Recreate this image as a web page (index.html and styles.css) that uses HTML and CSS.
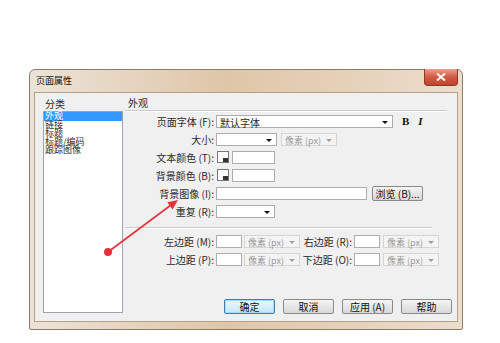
FILE: index.html
```html
<!DOCTYPE html>
<html>
<head>
	<title>页面属性</title>
	<meta charset="utf-8">
	<link rel="stylesheet" href="styles.css">
</head>
<body>
<div class="dlg">
	<!-- 标题栏 -->
	<div class="titlebar">
		<span class="title">页面属性</span>
		<span class="close"><svg width="10" height="8" viewBox="0 0 10 8"><path d="M1 0.5 L9 7.5 M9 0.5 L1 7.5" stroke="#fff" stroke-width="2"/></svg></span>
	</div>
	<div class="client">
		<!-- 分类 -->
		<div class="cat">
			<div class="cat-label">分类</div>
			<ul class="cat-list">
				<li class="on">外观</li>
				<li>链接</li>
				<li>标题</li>
				<li>标题/编码</li>
				<li>跟踪图像</li>
			</ul>
		</div>
		<!-- 外观 -->
		<div class="pane">
			<div class="pane-head">外观</div>
			<div class="row">
				<span class="lbl">页面字体 (F):</span>
				<span class="sel w-font">默认字体<i class="arr"></i></span>
				<span class="bi b">B</span>
				<span class="bi i">I</span>
			</div>
			<div class="row">
				<span class="lbl">大小:</span>
				<span class="sel w-size"><i class="arr"></i></span>
				<span class="sel off w-unit ml4">像素 (px)<i class="arr"></i></span>
			</div>
			<div class="row">
				<span class="lbl">文本颜色 (T):</span>
				<span class="swatch"><i></i></span>
				<span class="txt w-color"></span>
			</div>
			<div class="row">
				<span class="lbl">背景颜色 (B):</span>
				<span class="swatch"><i></i></span>
				<span class="txt w-color"></span>
			</div>
			<div class="row">
				<span class="lbl">背景图像 (I):</span>
				<span class="txt w-img"></span>
				<span class="btn browse">浏览 (B)...</span>
			</div>
			<div class="row">
				<span class="lbl">重复 (R):</span>
				<span class="sel w-rep"><i class="arr"></i></span>
			</div>
			<div class="sep"></div>
			<div class="row">
				<span class="lbl">左边距 (M):</span>
				<span class="txt w-num"></span>
				<span class="sel off w-unit ml2">像素 (px)<i class="arr"></i></span>
				<span class="lbl2">右边距 (R):</span>
				<span class="txt w-num"></span>
				<span class="sel off w-unit ml3">像素 (px)<i class="arr"></i></span>
			</div>
			<div class="row">
				<span class="lbl">上边距 (P):</span>
				<span class="txt w-num"></span>
				<span class="sel off w-unit ml2">像素 (px)<i class="arr"></i></span>
				<span class="lbl2">下边距 (O):</span>
				<span class="txt w-num"></span>
				<span class="sel off w-unit ml3">像素 (px)<i class="arr"></i></span>
			</div>
			<div class="buttons">
				<span class="btn ok">确定</span>
				<span class="btn">取消</span>
				<span class="btn">应用 (A)</span>
				<span class="btn">帮助</span>
			</div>
		</div>
	</div>
</div>

<!-- 红色指示箭头 -->
<svg class="pointer" width="500" height="343" viewBox="0 0 500 343">
	<line x1="108" y1="252" x2="171" y2="205" stroke="#e5323c" stroke-width="1.6"/>
	<polygon points="178,200 172.6,209.6 167.3,202.3" fill="#e5323c"/>
	<circle cx="108" cy="252" r="4" fill="#e5323c"/>
</svg>
</body>
</html>
```

FILE: styles.css
```css
body, ul, li { margin: 0; padding: 0; }
ul { list-style: none; }
body { background-color: #fff; font-family: "Noto Sans CJK SC", "Noto Sans", sans-serif; font-size: 10px; color: #2a2a2a; }

.dlg { width: 424px; margin: 69px 0 0 29px; padding: 0 4px 7px; border: 1px solid #8c7c68; border-radius: 6px 6px 2px 2px; background: linear-gradient(90deg, #ece3d8 0%, #dfc6a8 45%, #e6d2ba 75%, #ebdecd 100%); }
.titlebar { display: flex; justify-content: space-between; height: 22px; }
.title { padding: 5px 0 0 2px; font-size: 9px; line-height: 12px; color: #111; }
.close { display: flex; align-items: center; justify-content: center; width: 32px; height: 16px; margin-top: -1px; border: 1px solid #8a3a2c; border-top: 0; border-radius: 0 0 4px 4px; background: linear-gradient(#eba090, #d25a44 50%, #c04430); }

.client { display: flex; height: 230px; padding: 0 5px 0 8px; border: 1px solid #b4a28a; background-color: #f0f0f0; box-sizing: border-box; }

.cat { width: 80px; }
.cat-label { padding: 4px 0 0 2px; height: 14px; line-height: 14px; }
.cat-list { height: 202px; border: 1px solid #9ea4ad; background-color: #fff; box-sizing: border-box; }
.cat-list li { height: 8.5px; line-height: 8.5px; font-size: 9px; padding-left: 1px; }
.cat-list li.on { background-color: #3399ff; color: #fff; }

.pane { flex: 1; margin-left: 2px; }
.pane-head { height: 13px; margin-right: 5px; padding: 4px 0 0 3px; line-height: 11px; border-bottom: 1px solid #c9c9c9; box-shadow: 0 1px 0 #fff; }
.row { display: flex; align-items: center; height: 18px; }
.pane-head + .row { margin-top: 1px; }
.lbl { width: 89px; padding-right: 2px; text-align: right; white-space: nowrap; }
.lbl2 { width: 52px; text-align: right; white-space: nowrap; }

.sel, .txt { position: relative; height: 13px; line-height: 13px; border: 1px solid #abadb3; background-color: #fff; box-sizing: border-box; padding-left: 3px; white-space: nowrap; }
.sel .arr { position: absolute; right: 4px; top: 5px; width: 0; height: 0; border-left: 3px solid transparent; border-right: 3px solid transparent; border-top: 3px solid #111; }
.sel.off { background-color: #f4f4f4; border-color: #d5d5d5; color: #9a9a9a; font-size: 9px; }
.sel.off .arr { border-top-color: #a0a0a0; }

.w-font { width: 177px; }
.w-size { width: 61px; }
.w-unit { width: 56px; }
.w-color { width: 43px; margin-left: 3px; }
.w-img { width: 151px; }
.w-rep { width: 59px; }
.w-num { width: 26px; }
.ml2 { margin-left: 2px; }
.ml3 { margin-left: 3px; }
.ml4 { margin-left: 4px; }
.row .lbl2 + .txt { margin-left: 2px; }

.bi { font-family: "Liberation Serif", serif; font-weight: 700; font-size: 11px; color: #111; }
.b { margin-left: 9px; }
.i { margin-left: 9px; font-style: italic; }

.swatch { position: relative; width: 12px; height: 12px; margin-left: 1px; border: 1px solid #777; background-color: #fff; box-sizing: border-box; }
.swatch i { position: absolute; right: 0; bottom: 0; width: 5px; height: 4px; background-color: #333; }

.sep { height: 1px; margin: 7px 20px 4px 0; background-color: #c9c9c9; box-shadow: 0 1px 0 #fff; }

.btn { display: inline-flex; align-items: center; justify-content: center; height: 15px; border: 1px solid #8a8a8a; border-radius: 2px; background: linear-gradient(#f5f5f5, #e6e6e6 50%, #d8d8d8); box-sizing: border-box; color: #111; }
.browse { width: 51px; margin-left: 5px; }
.buttons { display: flex; justify-content: flex-end; gap: 8px; margin-top: 31px; }
.buttons .btn { width: 51px; }
.buttons .ok { border-color: #3c7fb1; box-shadow: inset 0 0 0 1px #a8dbf5; background: linear-gradient(#eaf6fd, #d9f0fc 50%, #bee6fd); }

.pointer { position: absolute; top: 0; left: 0; pointer-events: none; }
```
